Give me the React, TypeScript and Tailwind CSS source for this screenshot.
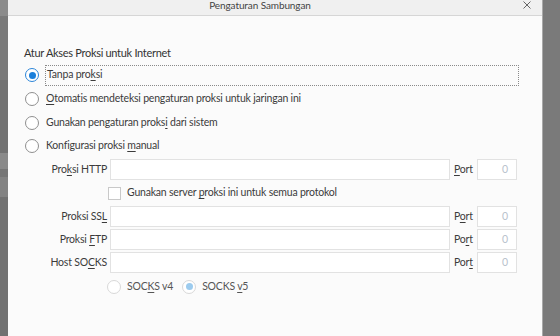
import React from "react";

const font = { fontFamily: 'Lato, "Noto Sans", sans-serif' };

function Radio({ checked, disabled }: { checked?: boolean; disabled?: boolean }) {
  return (
    <span
      className={`flex h-[14px] w-[14px] shrink-0 items-center justify-center rounded-full border bg-white ${
        disabled ? "border-[#d8d8d8]" : checked ? "border-[#2c85d8]" : "border-[#8f8f8f]"
      }`}
    >
      {checked && (
        <span className={`h-[7px] w-[7px] rounded-full ${disabled ? "bg-[#9ccbee]" : "bg-[#1a7fdb]"}`} />
      )}
    </span>
  );
}

function Key({ children }: { children: React.ReactNode }) {
  return <span className="underline underline-offset-2">{children}</span>;
}

function Field({ label, port }: { label: React.ReactNode; port: React.ReactNode }) {
  return (
    <div className="flex h-[23px] items-center">
      <div className="w-[102px] shrink-0 pr-[3px] text-right">{label}</div>
      <div className="h-[21px] w-[340px] shrink-0 border border-[#e2e2e2] bg-white" />
      <div className="w-[27px] shrink-0 pl-[4px]">{port}</div>
      <div className="flex h-[21px] w-[40px] shrink-0 items-center justify-end border border-[#e2e2e2] bg-white pr-[8px] text-[#b8c2cc]">
        0
      </div>
    </div>
  );
}

export default function App() {
  return (
    <div
      className="flex h-[336px] w-[560px] overflow-hidden bg-[#767676] text-[10.5px] tracking-[-0.2px] text-[#3b3b3b]"
      style={font}
    >
      {/* background window edge */}
      <div className="flex w-[8px] shrink-0 flex-col">
        <div className="h-[16px] bg-[#8b8b8b]" />
        <div className="h-[64px] bg-[#7a7a7a]" />
        <div className="h-[73px] bg-[#727272]" />
        <div className="h-[16px] bg-[#8a8a8a]" />
        <div className="h-[8px]" />
        <div className="h-[20px] bg-[#838383]" />
        <div className="flex-1 bg-[#727272]" />
      </div>

      {/* dialog */}
      <div className="flex w-[535px] shrink-0 flex-col border-r border-[#a9a9a9] bg-[#fbfbfb]">
        <div className="relative flex h-[16px] shrink-0 items-center justify-center border-b border-[#d6d6d6] bg-[#f0f0f0] pr-[30px]">
          <span className="-mt-[5px] text-[10px] tracking-[-0.1px] text-[#444]">Pengaturan Sambungan</span>
          <svg className="absolute right-[11px] top-[1px]" width="8" height="8" viewBox="0 0 8 8">
            <path d="M0.5 0.5 L7.5 7.5 M7.5 0.5 L0.5 7.5" stroke="#666" strokeWidth="1" />
          </svg>
        </div>

        <div className="pl-[16px] pt-[29px]">
          <div className="text-[11px] leading-[16px] tracking-[-0.3px] text-[#333]">
            Atur Akses Proksi untuk Internet
          </div>

          <div className="mt-[2px] flex flex-col">
            <div className="flex h-[24px] items-center">
              <div className="ml-[1px] w-[20px]">
                <Radio checked />
              </div>
              <div className="flex h-[21px] w-[474px] items-center border border-dotted border-[#8a8a8a] pl-[1px]">
                Tanpa pro<Key>k</Key>si
              </div>
            </div>
            <div className="flex h-[24px] items-center">
              <div className="ml-[1px] w-[21px]">
                <Radio />
              </div>
              <span>
                <Key>O</Key>tomatis mendeteksi pengaturan proksi untuk jaringan ini
              </span>
            </div>
            <div className="flex h-[23px] items-center">
              <div className="ml-[1px] w-[21px]">
                <Radio />
              </div>
              <span>
                Gunakan pengaturan proks<Key>i</Key> dari sistem
              </span>
            </div>
            <div className="flex h-[23px] items-center">
              <div className="ml-[1px] w-[21px]">
                <Radio />
              </div>
              <span>
                Konfigurasi proksi <Key>m</Key>anual
              </span>
            </div>
          </div>

          <div className="-ml-[16px] mt-[1px] flex flex-col">
            <Field
              label={
                <>
                  Pro<Key>k</Key>si HTTP
                </>
              }
              port={
                <>
                  <Key>P</Key>ort
                </>
              }
            />
            <div className="flex h-[24px] items-center pl-[100px]">
              <span className="mr-[6px] h-[13px] w-[13px] border border-[#c9c9c9] bg-white" />
              <span>
                Gunakan server <Key>p</Key>roksi ini untuk semua protokol
              </span>
            </div>
            <Field
              label={
                <>
                  Proksi SS<Key>L</Key>
                </>
              }
              port={
                <>
                  P<Key>o</Key>rt
                </>
              }
            />
            <Field
              label={
                <>
                  Proksi <Key>F</Key>TP
                </>
              }
              port={
                <>
                  Po<Key>r</Key>t
                </>
              }
            />
            <Field
              label={
                <>
                  Host SO<Key>C</Key>KS
                </>
              }
              port={
                <>
                  Por<Key>t</Key>
                </>
              }
            />
            <div className="flex h-[25px] items-center pl-[99px] text-[#555]">
              <Radio disabled />
              <span className="ml-[6px] mr-[9px]">
                SOC<Key>K</Key>S v4
              </span>
              <Radio checked disabled />
              <span className="ml-[6px]">
                SOCKS <Key>v</Key>5
              </span>
            </div>
          </div>
        </div>
      </div>

      <div className="flex-1 bg-[#7a7a7a]" />
    </div>
  );
}
